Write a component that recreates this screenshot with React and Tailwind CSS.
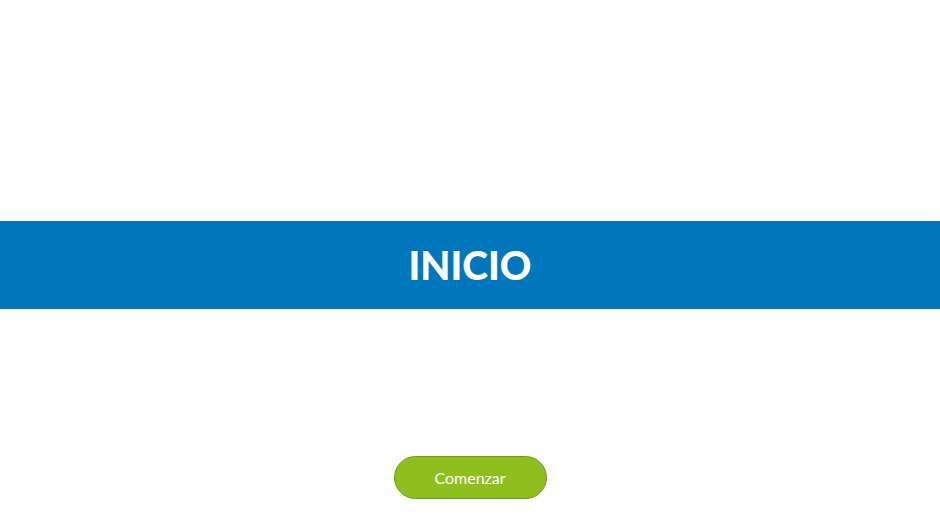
import React from 'react';

const App = () => {
    return (
        <div className="w-full h-[528px] bg-white flex flex-col" style={{ fontFamily: 'Lato, "Open Sans", sans-serif' }}>
            <div className="h-[221px]" />
            <div className="h-[88px] bg-[#0077bd] flex items-center justify-center">
                <h1 className="text-white text-[39px] font-black leading-none">INICIO</h1>
            </div>
            <div className="flex justify-center pt-[147px]">
                <button className="w-[153px] h-[43px] rounded-full bg-[#8fbf1f] border border-[#6f9a12] text-white text-[16px] leading-none pt-px">
                    Comenzar
                </button>
            </div>
        </div>
    );
};

export default App;
